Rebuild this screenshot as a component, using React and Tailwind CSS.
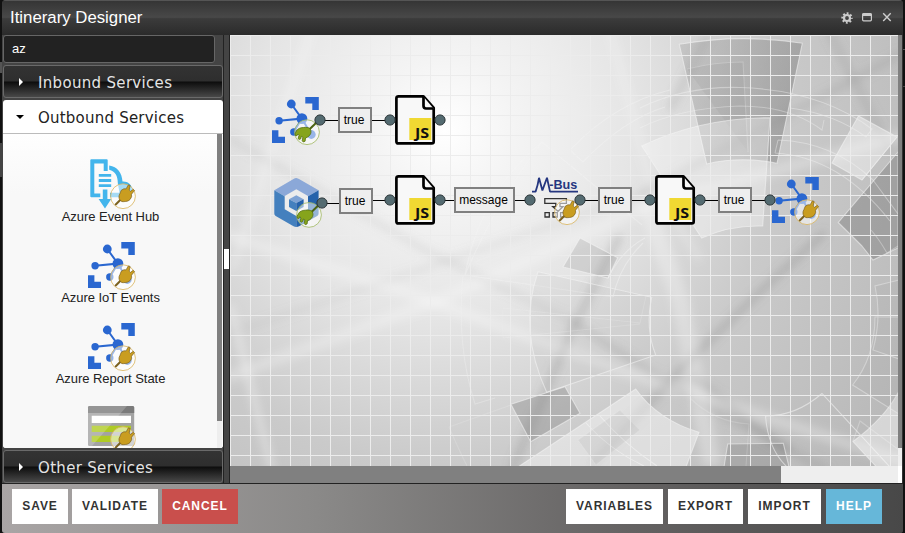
import React from "react";

const SANS = "font-['Liberation_Sans',Arial,sans-serif]";

function Badge({ green = false }) {
  const tone = green ? "#9fb860" : "#d9b45c";
  return (
    <g>
      <circle cx="35" cy="35.2" r="12.4" fill="#fff" fillOpacity="0.52" stroke={tone} strokeWidth="0.8" />
      {green ? (
        <g>
          <path d="M44.500 25.500 37 32.800" stroke="#4c6312" strokeWidth="2" />
          <path
            d="M38 31.600c1.500 2.200 1.300 5-.500 6.900-1 1.200-2.400 2-4 2.500l-.400 3.200-1.800.8-1.100-1.200.7-3.600-1.600-.9-.500 2.500-1.500.7-1.200-.9.900-3.300-1.200-1.300-1 1.900-1.500-.5-.2-1.600 1.200-2.800c1.200-2.200 3.900-3.400 7.200-3.500 2.500-.4 4.800-.2 6.500 1.100z"
            fill="#86a41c"
            stroke="#55700f"
            strokeWidth="0.8"
          />
        </g>
      ) : (
        <g>
          <path d="M27.2 44 33 38.2" stroke="#7c6220" strokeWidth="2" />
          <path
            d="M32.2 39.2c-1.7-1.8-1.6-4.6-.2-6.8l1.2-3.1 2.700-1.500 2.200.1 2.200-4 1.800.5-.9 4.600 1.300 1.300 2.800-2 1.200 1.300-3 3.600.1 2.600-1.500 2.600c-1.200 1.600-3.900 2.200-6.100 2.200-1.400.3-2.600-.1-3.800-1.400z"
            fill="#c99d20"
            stroke="#7c6220"
            strokeWidth="0.7"
          />
        </g>
      )}
    </g>
  );
}

function IotIcon({ green }) {
  return (
    <svg width="48" height="48" viewBox="0 0 48 48" className="block overflow-visible">
      <g fill="#2a67d0" stroke="none">
        <path d="M33.3 0h13.5v13h-6.5V6.5h-7zM0 33.2h6.4v6.6H13V46H0z" />
        <circle cx="19.3" cy="7" r="4.4" />
        <circle cx="7.1" cy="23.7" r="3.7" />
        <circle cx="29.9" cy="21.6" r="5.4" />
        <circle cx="21.8" cy="35" r="3.7" />
        <circle cx="39.3" cy="37.5" r="4.4" />
        <path d="M19.3 7 29.9 21.6 7.1 23.7M21.8 35l8.1-13.4 9.4 16" fill="none" stroke="#2a67d0" strokeWidth="2" />
      </g>
      <Badge green={green} />
    </svg>
  );
}

function EventHubIcon() {
  return (
    <svg width="48" height="48" viewBox="0 0 48 48" className="block overflow-visible">
      <g fill="#43b5ec">
        <path d="M3.3-1.7h15.4a1 1 0 0 1 1 1V10h-4V2.6H6.3v29.8h6v3.8h-9a1 1 0 0 1-1-1V-.7a1 1 0 0 1 1-1z" />
        <path d="M10.8 13h12.4v2.8H10.8zM10.8 18h12.4v2.9H10.8zM10.8 23.2h12.4V26H10.8zM14.8 28.4h4.6v9.6h3.8L17 47.4 10.6 38h4.2z" />
        <path d="M21.2 4.5C29.5 5.6 34 12 34.5 20.5c5-.4 9.5 3 9.5 8 0 4.500-3.500 7.700-8 7.700H22V31.800h9.500L29.800 22c0-7-2.600-11.700-8.600-13.200z" />
      </g>
      <Badge />
    </svg>
  );
}

function StorageIcon() {
  return (
    <svg width="48" height="48" viewBox="0 0 48 48" className="block overflow-visible">
      <rect x="0" y="2" width="46.2" height="40" rx="1.500" fill="#a3a3a3" />
      <path d="M1.500 2h43.200a1.500 1.500 0 0 1 1.500 1.500V9H0V3.500A1.500 1.500 0 0 1 1.500 2z" fill="#7b7b7b" />
      <path d="M3.700 11.700H43v7.300H3.700z" fill="#fff" />
      <path d="M3.700 21.700H43V28H3.700zM3.700 31.700H43V38H3.700z" fill="#afcb25" />
      <path d="M0 3.500A1.500 1.500 0 0 1 1.500 2H39L4 42H1.500A1.500 1.500 0 0 1 0 40.500z" fill="#fff" fillOpacity="0.2" />
      <Badge />
    </svg>
  );
}

function CubeIcon() {
  return (
    <svg width="48" height="50" viewBox="0 0 48 50" className="block overflow-visible">
      <path d="M22.300 0 Q24 .3 25 1L44.600 12.300 22.300 25 0.300 12.300 19.500 1Q21 .1 22.300 0z" fill="#8ba8d8" />
      <path d="M.3 12.300 22.300 25v24q-1.500 0-2.800-.8L1.700 38Q.3 37 .3 35.500z" fill="#4480be" />
      <path d="M44.600 12.300 22.300 25v24q1.500 0 2.800-.8L43.200 38q1.400-1 1.400-2.500z" fill="#2562ab" />
      <path d="M22.300 11.200 34 17.900v13.400L22.300 38 10.700 31.300V17.900z" fill="#ececec" />
      <path d="M22.300 17.300 29.600 21.200 22.300 25 15 21.200z" fill="#7fa3d4" />
      <path d="M15 21.200 22.300 25v8L15 29z" fill="#4480be" />
      <path d="M29.600 21.200 22.300 25v8l7.300-4z" fill="#2562ab" />
      <g transform="translate(0 1.700)"><Badge green /></g>
    </svg>
  );
}

function MBusIcon() {
  return (
    <svg width="48" height="48" viewBox="0 0 48 48" className="block overflow-visible">
      <path d="M0 14.600h3.600Q5.800 8.500 7 .8L10.400 13.400 15 .8 18 14.600h28" fill="none" stroke="#25367f" strokeWidth="1.800" strokeLinejoin="bevel" />
      <text x="17.300" y="12.200" fontSize="13" fontWeight="bold" textLength="28" lengthAdjust="spacingAndGlyphs" fill="#25367f" className={SANS}>-Bus</text>
      <path d="M12.800 21.600h21.600v4.800h-6.400v3.300h3l-5 4.600-5.200-4.600h3v-3.300h-11z" fill="#eee" stroke="#333" strokeWidth="1.300" />
      <path d="M13 35.700h4.300v4.300H13zM21 35.700h4.300v4.300H21zM28.600 35.700h4.300v4.300h-4.300z" fill="none" stroke="#333" strokeWidth="1.300" />
      <Badge />
    </svg>
  );
}

function JsFileIcon() {
  return (
    <svg width="41" height="50" viewBox="0 0 41 50" className="block overflow-visible">
      <path d="M3.500 1.300h25L38.700 13v33.500q0 1.900-1.900 1.900H3.300q-1.900 0-1.900-1.900V3.200q0-1.900 2.100-1.900z" fill="#f8f8f8" stroke="#000" strokeWidth="2.700" strokeLinejoin="round" />
      <path d="M28.500 1.800v9q0 2.700 2.500 2.700h7.500" fill="#f8f8f8" stroke="#000" strokeWidth="2.700" />
      <path d="M14.300 23h22v22h-22z" fill="#f0d932" />
      <text x="20" y="42.800" fontSize="13.500" fontWeight="bold" textLength="14.200" lengthAdjust="spacingAndGlyphs" fill="#111" className="font-['Open_Sans',sans-serif]">JS</text>
    </svg>
  );
}

function Backdrop() {
  return (
    <svg width="668" height="431" viewBox="230 35 668 431" className="absolute inset-0 block">
      <defs>
        <radialGradient id="glow" gradientUnits="userSpaceOnUse" cx="445" cy="130" r="540">
          <stop offset="0" stopColor="#ffffff" />
          <stop offset="0.130" stopColor="#f4f4f4" />
          <stop offset="0.350" stopColor="#e5e5e5" />
          <stop offset="0.620" stopColor="#cacaca" />
          <stop offset="1" stopColor="#b8b8b8" />
        </radialGradient>
        <filter id="soft" x="-20%" y="-20%" width="140%" height="140%"><feGaussianBlur stdDeviation="4" /></filter>
        <linearGradient id="wedge" x1="0" y1="0" x2="1" y2="0.300">
          <stop offset="0" stopColor="#8a8a8a" stopOpacity="0.250" />
          <stop offset="1" stopColor="#777" stopOpacity="0.450" />
        </linearGradient>
        <pattern id="grid" patternUnits="userSpaceOnUse" x="250" y="55" width="20" height="20">
          <path d="M0 0h20v1H1v19H0z" fill="#ececec" />
        </pattern>
      </defs>
      <rect x="230" y="35" width="668" height="431" fill="url(#glow)" />
      <g filter="url(#soft)" fill="none">
        <path d="M225 335 420 270 640 195" stroke="#999" strokeOpacity="0.140" strokeWidth="6" />
        <path d="M640 195 905 52" stroke="#888" strokeOpacity="0.250" strokeWidth="6" />
        <path d="M228 138 425 250 570 320" stroke="#888" strokeOpacity="0.130" strokeWidth="8" />
        <path d="M570 320 670 385 770 440 830 472" stroke="#888" strokeOpacity="0.250" strokeWidth="8" />
        <path d="M825 232 760 292 692 358 590 466" stroke="#777" strokeOpacity="0.280" strokeWidth="7" />
        <path d="M620 235 570 335 512 470" stroke="#777" strokeOpacity="0.250" strokeWidth="8" />
        <path d="M828 30 890 150" stroke="#888" strokeOpacity="0.220" strokeWidth="8" />
        <path d="M708 35 670 110" stroke="#888" strokeOpacity="0.200" strokeWidth="8" />
        <path d="M690 375 790 452" stroke="#777" strokeOpacity="0.250" strokeWidth="8" />
        <path d="M225 235 400 290 620 370 905 462" stroke="#fff" strokeOpacity="0.280" strokeWidth="11" />
        <path d="M225 378 440 300 650 205 905 135" stroke="#fff" strokeOpacity="0.250" strokeWidth="12" />
        <path d="M645 200 680 300 712 466" stroke="#fff" strokeOpacity="0.280" strokeWidth="18" />
        <path d="M312 28 265 170 232 270" stroke="#fff" strokeOpacity="0.250" strokeWidth="7" />
        <path d="M230 305 272 470" stroke="#fff" strokeOpacity="0.350" strokeWidth="7" />
        <path d="M610 30 650 180 700 260" stroke="#fff" strokeOpacity="0.200" strokeWidth="8" />
      </g>
      <g stroke="#f5f5f5" strokeOpacity="0.550" strokeWidth="1.100" fill="none">
        <path d="M679.300 44.300Q740 33.500 802.300 43.300L777 163.300Q741 156 706.700 164z" fill="url(#wedge)" />
        <path d="M687 69q28-7 56-7l5 90" strokeOpacity="0.250" fill="#888" fillOpacity="0.130" />
        <path d="M641.700 146Q700 118 770 117.700L762.700 226Q730 225 701.700 238z" fill="#fff" fillOpacity="0.330" />
        <path d="M858.500 116 897 137 862 180 832 163z" fill="#fff" fillOpacity="0.400" />
        <path d="M898 152 838.300 222.500Q850 234 862 246L873 260 898 248z" fill="#777" fillOpacity="0.420" />
        <path d="M871 230q8 9 16 23l11-7" strokeOpacity="0.350" />
        <path d="M640 108Q685 86 740 87.500 820 90 872 129L866 137Q835 114 790 108" strokeOpacity="0.400" />
        <path d="M640 128Q680 108 740 106q50 0 82 24l2-10" strokeOpacity="0.350" />
        <path d="M778 140q55 2 95 40l25 34M775 153q65 4 115 68M778 140l-3 13" strokeOpacity="0.400" />
        <path d="M570 150q45-47 100-60M583 162q40-42 82-55M570 150l13 12" strokeOpacity="0.400" />
        <path d="M465 275q15-82 77-133l100 83M542 142q-46 60-77 133l148 22" strokeOpacity="0.350" />
        <path d="M580 238 617.700 257.700 608 278 563 267z" fill="#888" fillOpacity="0.220" />
        <path d="M538 271.700 651.700 297.300Q645 328 655.700 355L546.700 392.300Q518 330 538 271.700z" fill="#aaa" fillOpacity="0.120" />
        <path d="M463 275q-7 70 12 129l20-6" strokeOpacity="0.300" />
        <path d="M511 404.300 565 386.700 580 413.300 530.700 441.700z" fill="#777" fillOpacity="0.330" />
        <path d="M449 427 511 405M449 427q10 23 18 39M503 308l137 15 6-27M503 308v30l137-14" strokeOpacity="0.200" />
        <path d="M518 467 635.700 389Q658 420 699 432.300L686 467z" fill="#fff" fillOpacity="0.420" />
        <path d="M586 423q24 27 58 43M600 416q23 27 57 50" strokeOpacity="0.600" />
        <path d="M578 440 620 410 640 430 596 465z" fill="#999" fillOpacity="0.140" strokeOpacity="0.150" />
        <path d="M608 278Q622 250 645 238M613 297q7-32 30-54" strokeOpacity="0.450" />
        <path d="M724 467 727.700 444 783.300 443.300 789 467z" fill="#777" fillOpacity="0.300" />
        <path d="M787 467q-19-18-21.500-51Q796 416 822 393.500L890 467" />
        <path d="M690 398q24 24 59 26l-3 42" strokeOpacity="0.200" />
        <path d="M899 391q-14 27-46 50.500l25 27h21z" fill="#fff" fillOpacity="0.420" />
        <path d="M899 317h-24q0 40-22.300 68L899 414M899 280l-24 6q7 30-2 64l26 9" fill="#888" fillOpacity="0.080" strokeOpacity="0.400" />
        <path d="M853 441 860 421 899 450M862 180l36-44" strokeOpacity="0.300" />
      </g>
      <rect x="230" y="35" width="668" height="431" fill="url(#grid)" />
    </svg>
  );
}

const ports = [
  [320, 120], [390, 120], [440, 120], [322, 203], [390, 200], [440, 200],
  [530, 200], [580, 200], [650, 200], [700, 200], [770, 200],
];

function Wires() {
  return (
    <svg width="668" height="431" viewBox="230 35 668 431" className="absolute inset-0 block">
      <path
        d="M320 120.500h70M322 203.500h20M370 200.500h20M440 200.500h90M580 200.500h70M700 200.500h70"
        stroke="#000"
        strokeWidth="1"
      />
    </svg>
  );
}

function Ports() {
  return (
    <svg width="668" height="431" viewBox="230 35 668 431" className="absolute inset-0 block">
      {ports.map(([x, y]) => (
        <circle key={`${x}-${y}`} cx={x} cy={y} r="5.100" fill="#546b71" stroke="#2b3538" strokeWidth="1" />
      ))}
    </svg>
  );
}

function Condition({ place, children }) {
  return (
    <div className={`absolute flex h-[26px] items-center justify-center border-2 border-[#808080] bg-[#eeeeee] pr-[2px] text-[12px] leading-none text-black ${place}`}>
      {children}
    </div>
  );
}

function Canvas() {
  return (
    <div className="relative h-[431px] w-[668px] overflow-hidden">
      <Backdrop />
      <Wires />
      <div className="absolute left-[42px] top-[62px]"><IotIcon green /></div>
      <div className="absolute left-[165px] top-[60px]"><JsFileIcon /></div>
      <div className="absolute left-[44px] top-[143px]"><CubeIcon /></div>
      <div className="absolute left-[165px] top-[140px]"><JsFileIcon /></div>
      <div className="absolute left-[302px] top-[142px]"><MBusIcon /></div>
      <div className="absolute left-[425px] top-[140px]"><JsFileIcon /></div>
      <div className="absolute left-[542px] top-[142px]"><IotIcon /></div>
      <Condition place="left-[108px] top-[72px] w-[34px]">true</Condition>
      <Condition place="left-[109px] top-[153px] w-[34px]">true</Condition>
      <Condition place="left-[224px] top-[152px] w-[61px]">message</Condition>
      <Condition place="left-[368px] top-[152px] w-[34px]">true</Condition>
      <Condition place="left-[488px] top-[152px] w-[34px]">true</Condition>
      <Ports />
    </div>
  );
}

function SectionHeader({ title }) {
  return (
    <div className="flex h-[33px] items-center rounded-[3px] border border-[#6a6a6a] bg-[linear-gradient(to_bottom,#333_0%,#2e2e2e_49%,#0c0c0c_51%,#484848_100%)]">
      <span className="ml-[15px] h-0 w-0 border-y-4 border-l-[4px] border-y-transparent border-l-white" />
      <span className="ml-[15px] pt-[3px] font-['DejaVu_Sans',Verdana,sans-serif] text-[15px] leading-none tracking-[0.32px] text-[#e4e4e4]">{title}</span>
    </div>
  );
}

function Service({ icon, name }) {
  return (
    <div className="flex h-[81px] shrink-0 flex-col items-center">
      <div className="ml-[4px] h-12 w-12">{icon}</div>
      {name && <div className="mt-px pl-px text-[13px] leading-[14px] tracking-[-0.05px] text-[#222]">{name}</div>}
    </div>
  );
}

function Sidebar() {
  return (
    <div className="flex h-[448px] w-[221px] flex-col bg-[#444] pl-px">
      <div className="flex h-[28px] w-[212px] items-center rounded-[3px] border border-[#666] bg-[#222] pl-2 text-[13px] text-white">az</div>
      <div className="mt-[2px]"><SectionHeader title="Inbound Services" /></div>
      <div className="mt-[2px] flex h-[348px] flex-col overflow-hidden rounded-[3px] bg-white">
        <div className="flex h-[34px] shrink-0 items-center border-b border-[#bbb]">
          <span className="ml-[13px] h-0 w-0 border-x-4 border-t-4 border-x-transparent border-t-black" />
          <span className="ml-[14px] pt-[3px] font-['DejaVu_Sans',Verdana,sans-serif] text-[15px] leading-none tracking-[0.22px] text-[#222]">Outbound Services</span>
        </div>
        <div className="flex min-h-0 flex-1 overflow-hidden bg-[linear-gradient(to_bottom,#fefefe_0px,#f8f8f8_60px)]">
          <div className="flex flex-1 flex-col overflow-hidden pt-[27px]">
            <Service icon={<EventHubIcon />} name="Azure Event Hub" />
            <Service icon={<IotIcon />} name="Azure IoT Events" />
            <Service icon={<IotIcon />} name="Azure Report State" />
            <Service icon={<StorageIcon />} />
          </div>
          <div className="mr-px w-[5px] bg-[#eee]"><div className="h-[287px] bg-[#808080]" /></div>
        </div>
      </div>
      <div className="mt-[2px]"><SectionHeader title="Other Services" /></div>
    </div>
  );
}

function TitleIcons() {
  return (
    <svg width="54" height="14" viewBox="0 0 54 14" className="block">
      <circle cx="7" cy="8" r="3" fill="none" stroke="#ccc" strokeWidth="2.200" />
      <circle cx="7" cy="8" r="4.700" fill="none" stroke="#ccc" strokeWidth="2" strokeDasharray="1.850 1.840" strokeDashoffset="0.900" />
      <rect x="22.600" y="3.600" width="8.800" height="7.200" rx="1" fill="none" stroke="#ccc" strokeWidth="1.200" />
      <path d="M22.500 3.400h9v2.600h-9z" fill="#ccc" />
      <path d="m43.200 3.200 7.500 7.800m0-7.800-7.500 7.800" stroke="#ccc" strokeWidth="1.400" />
    </svg>
  );
}

function FooterButton({ look = "bg-white text-[#333]", width, children }) {
  return (
    <button className={`flex h-[35px] items-center justify-center pb-px text-[12px] font-bold tracking-[0.95px] ${look} ${width}`}>
      {children}
    </button>
  );
}

export default function App() {
  return (
    <div className={`flex h-[533px] w-[905px] overflow-hidden bg-[#111] ${SANS}`}>
      <div className="flex w-[2px] flex-col">
        <div className="mt-[62px] h-[11px] bg-[#555]" />
        <div className="mt-[70px] h-[34px] bg-[#444]" />
      </div>
      <div className="flex h-[533px] w-[901px] flex-col overflow-hidden rounded-t-[4px] rounded-b-[3px] bg-[#444]">
        <header className="flex h-[35px] items-center border-t border-[#555] bg-[linear-gradient(to_bottom,#353535_0%,#484848_48%,#3b3b3b_52%,#2b2b2b_100%)] pl-2">
          <h1 className="text-[16.8px] leading-none text-white">Itinerary Designer</h1>
          <div className="mb-[2px] ml-auto mr-[9px]"><TitleIcons /></div>
        </header>
        <main className="flex h-[448px]">
          <Sidebar />
          <div className="flex w-[7px] flex-col border-x border-[#222] bg-[#444]">
            <div className="mt-[214px] h-5 bg-white" />
          </div>
          <div className="flex">
            <div className="flex w-[668px] flex-col">
              <Canvas />
              <div className="h-[17px] bg-[#eee]"><div className="h-full w-[551px] bg-[#808080]" /></div>
            </div>
            <div className="w-[4px] bg-white">
              <div className="h-[413px] bg-[#808080]" />
              <div className="h-[18px] bg-[#eee]" />
            </div>
            <div className="w-px bg-[#333]" />
          </div>
        </main>
        <footer className="flex flex-1 items-start border-t border-[#222] bg-[linear-gradient(to_right,#a9a5a5_0%,#8a8988_35%,#646262_70%,#484848_100%)] px-[10px] pt-[5px]">
          <div className="flex gap-1">
            <FooterButton width="w-[56px]">SAVE</FooterButton>
            <FooterButton width="w-[86px]">VALIDATE</FooterButton>
            <FooterButton width="w-[76px]" look="bg-[#c94f4c] text-white">CANCEL</FooterButton>
          </div>
          <div className="ml-auto mr-[11px] flex gap-[5px]">
            <FooterButton width="w-[97px]">VARIABLES</FooterButton>
            <FooterButton width="w-[75px]">EXPORT</FooterButton>
            <FooterButton width="w-[73px]">IMPORT</FooterButton>
            <FooterButton width="w-[56px]" look="bg-[#66b7d9] text-white">HELP</FooterButton>
          </div>
        </footer>
      </div>
      <div className="flex flex-1 flex-col">
        <div className="mt-[49px] h-px bg-[#555]" />
        <div className="mt-[36px] h-px bg-[#444]" />
      </div>
    </div>
  );
}
